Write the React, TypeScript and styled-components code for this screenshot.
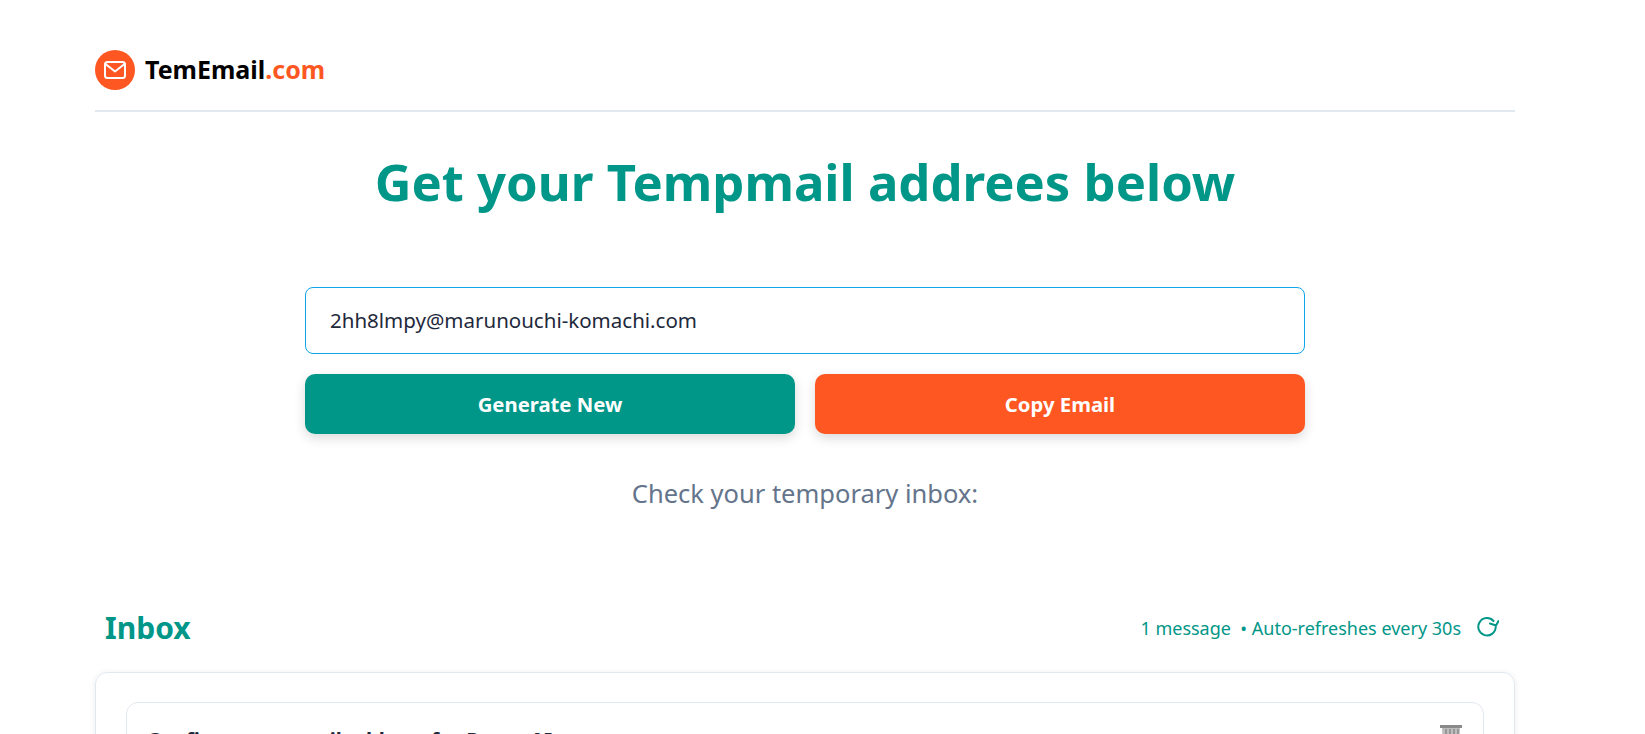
import React from "react";
import styled, { createGlobalStyle } from "styled-components";

const GlobalStyle = createGlobalStyle`
  html, body {
    margin: 0;
    height: 100%;
    overflow: hidden;
    background: #fff;
    font-family: "Noto Sans", "Open Sans", sans-serif;
  }
  * { box-sizing: border-box; }
`;

const Page = styled.div`
  width: 1420px;
  margin-left: 95px;
`;

const Header = styled.header`
  display: flex;
  align-items: center;
  gap: 10px;
  height: 112px;
  padding-top: 29px;
  border-bottom: 2px solid #e2e8f0;
`;

const LogoBadge = styled.div`
  width: 40px;
  height: 40px;
  border-radius: 50%;
  background: #ff5722;
  display: flex;
  align-items: center;
  justify-content: center;
`;

const Brand = styled.div`
  margin-bottom: 2px;
  font-size: 25px;
  font-weight: 700;
  color: #000;
  span { color: #ff5722; }
`;

const Hero = styled.section`
  display: flex;
  flex-direction: column;
  align-items: center;
`;

const Heading = styled.h1`
  margin: 35px 0 0;
  font-size: 50.8px;
  line-height: 70px;
  font-weight: 700;
  color: #009688;
`;

const EmailBox = styled.div`
  width: 1000px;
  height: 67px;
  margin-top: 70px;
  padding: 0 24px 2px;
  display: flex;
  align-items: center;
  border: 1px solid #0ea5e9;
  border-radius: 8px;
  font-size: 20.5px;
  color: #1e293b;
`;

const ButtonRow = styled.div`
  width: 1000px;
  display: flex;
  gap: 20px;
  margin-top: 20px;
`;

const ActionButton = styled.button<{ $bg: string }>`
  flex: 1;
  height: 60px;
  border: 0;
  border-radius: 10px;
  background: ${(p) => p.$bg};
  color: #fff;
  font-family: inherit;
  font-size: 20.3px;
  font-weight: 700;
  box-shadow: 0 4px 12px rgba(0, 0, 0, 0.15);
`;

const Hint = styled.p`
  margin: 41px 0 0;
  font-size: 25.5px;
  line-height: 36px;
  color: #64748b;
`;

const InboxBar = styled.div`
  display: flex;
  align-items: center;
  justify-content: space-between;
  margin-top: 91px;
  padding: 0 16px 0 10px;
  height: 50px;
`;

const InboxTitle = styled.h2`
  margin: 0;
  font-size: 30px;
  font-weight: 700;
  color: #009688;
`;

const InboxMeta = styled.div`
  display: flex;
  align-items: center;
  gap: 16px;
  margin-top: 1px;
  font-size: 18px;
  color: #009688;
`;

const Card = styled.div`
  margin-top: 20px;
  padding: 29px 30px 30px;
  border: 1px solid #e2e8f0;
  border-radius: 12px;
  box-shadow: 0 1px 6px rgba(0, 0, 0, 0.08);
`;

const Message = styled.div`
  display: flex;
  justify-content: space-between;
  padding: 22px 20px 20px;
  height: 120px;
  border: 1px solid #e2e8f0;
  border-radius: 12px;
`;

const Subject = styled.div`
  font-size: 20.3px;
  line-height: 28px;
  font-weight: 700;
  color: #1e293b;
`;

const MailIcon = () => (
  <svg width="24" height="24" viewBox="0 0 24 24" fill="none" stroke="#fff" strokeWidth="2" strokeLinecap="round" strokeLinejoin="round">
    <rect x="2" y="4" width="20" height="16" rx="2.5" />
    <path d="M2.5 6L12 13.5L21.5 6" />
  </svg>
);

const RefreshIcon = () => (
  <svg width="22" height="22" viewBox="0 0 22 22" fill="none" stroke="#009688" strokeWidth="2" strokeLinecap="round" strokeLinejoin="round">
    <path d="M16.5 4A8.7 8.7 0 1 0 18.7 10" />
    <path d="M13 6.5L19 8.5L21.5 4" />
  </svg>
);

const TrashIcon = () => (
  <svg width="24" height="24" viewBox="0 0 24 24">
    <path d="M1 0h22v3H1z" fill="#8a8a8a" />
    <path d="M3 3h18l-1 20H4z" fill="#bdbdbd" />
    <path d="M7 4v18M11 4v18M15 4v18M19 4v18" stroke="#8a8a8a" strokeWidth="1.5" />
  </svg>
);

export default function App() {
  return (
    <>
      <GlobalStyle />
      <Page>
        <Header>
          <LogoBadge>
            <MailIcon />
          </LogoBadge>
          <Brand>
            TemEmail<span>.com</span>
          </Brand>
        </Header>
        <Hero>
          <Heading>Get your Tempmail addrees below</Heading>
          <EmailBox>2hh8lmpy@marunouchi-komachi.com</EmailBox>
          <ButtonRow>
            <ActionButton $bg="#009688">Generate New</ActionButton>
            <ActionButton $bg="#ff5722">Copy Email</ActionButton>
          </ButtonRow>
          <Hint>Check your temporary inbox:</Hint>
        </Hero>
        <InboxBar>
          <InboxTitle>Inbox</InboxTitle>
          <InboxMeta>
            <span>1 message &nbsp;• Auto-refreshes every 30s</span>
            <RefreshIcon />
          </InboxMeta>
        </InboxBar>
        <Card>
          <Message>
            <Subject>Confirm your email address for Pepar AI</Subject>
            <TrashIcon />
          </Message>
        </Card>
      </Page>
    </>
  );
}
